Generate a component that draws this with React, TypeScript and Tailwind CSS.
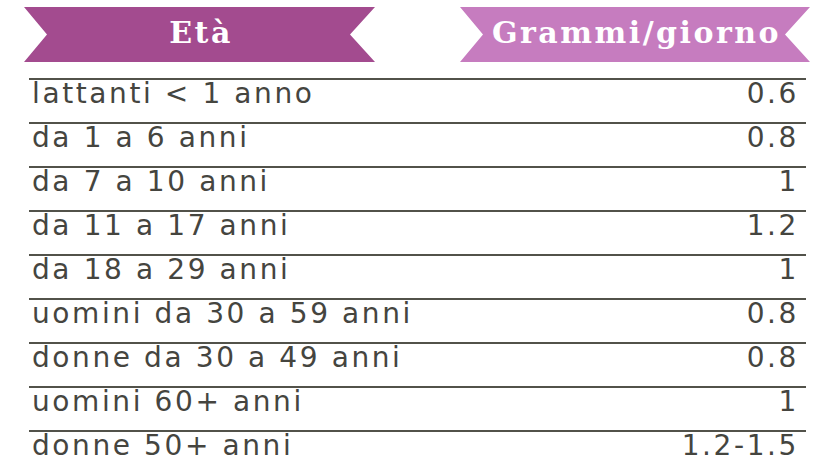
const rows: [string, string][] = [
  ['lattanti < 1 anno', '0.6'],
  ['da 1 a 6 anni', '0.8'],
  ['da 7 a 10 anni', '1'],
  ['da 11 a 17 anni', '1.2'],
  ['da 18 a 29 anni', '1'],
  ['uomini da 30 a 59 anni', '0.8'],
  ['donne da 30 a 49 anni', '0.8'],
  ['uomini 60+ anni', '1'],
  ['donne 50+ anni', '1.2-1.5'],
];

function Ribbon({ label, color }: { label: string; color: string }) {
  return (
    <div
      className={`flex h-[55px] items-center justify-center pb-[4px] pl-[3px] [clip-path:polygon(0_0,100%_0,calc(100%-25px)_50%,100%_100%,0_100%,23px_50%)] ${color}`}
    >
      <span className="font-['DejaVu_Serif',serif] text-[30px] font-bold tracking-[2.5px] text-white">
        {label}
      </span>
    </div>
  );
}

export default function App() {
  return (
    <div className="h-[475px] w-[840px] overflow-hidden bg-white">
      {/* Header ribbons */}
      <div className="flex gap-[85px] pl-[24px] pt-[7px]">
        <div className="w-[351px]">
          <Ribbon label="Età" color="bg-[#a34b8f]" />
        </div>
        <div className="w-[350px]">
          <Ribbon label="Grammi/giorno" color="bg-[#c67cbf]" />
        </div>
      </div>

      {/* Table */}
      <div className="ml-[29px] mt-[16px] w-[777px] font-['DejaVu_Sans',sans-serif] text-[28px] tracking-[2.6px] text-[#45453f]">
        {rows.map(([age, grams]) => (
          <div
            key={age}
            className="flex h-[44px] justify-between border-t-2 border-[#52524a] pl-[3px] pr-[7px] leading-[27px]"
          >
            <span>{age}</span>
            <span>{grams}</span>
          </div>
        ))}
      </div>
    </div>
  );
}
